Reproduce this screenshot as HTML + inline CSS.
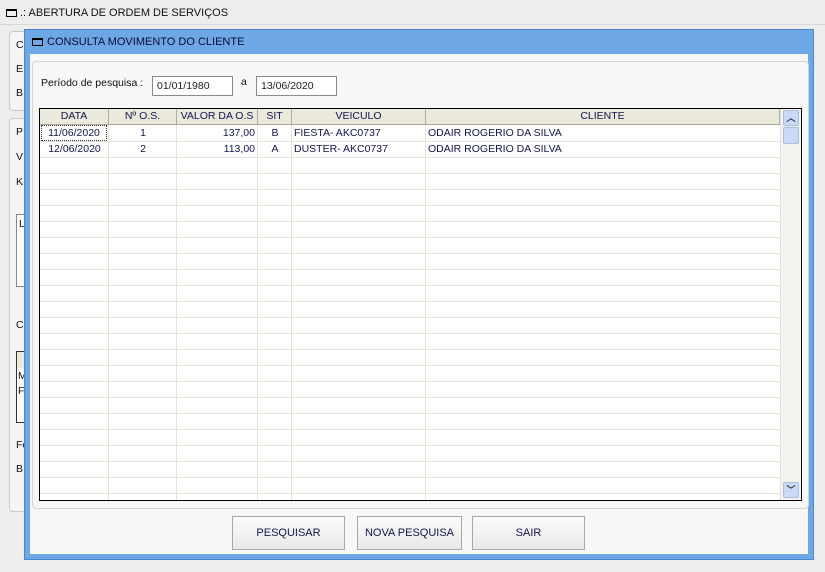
<!DOCTYPE html><html><head><style>
*{box-sizing:border-box;margin:0;padding:0}
body{width:825px;height:572px;background:#ededed;font-family:"Liberation Sans",sans-serif;font-size:10.5px;color:#222;position:relative;overflow:hidden}
.a{position:absolute}
.gb{position:absolute;border:1px solid #c8c8c8;border-radius:4px;background:#f5f5f5}
.l{position:absolute;font-size:10.5px;color:#111}
.ic{position:absolute;width:11px;height:8px;border:1.5px solid #000;border-top-width:2px}
.grid div.r{position:absolute;left:0;right:21px;height:1px;background:#e6e3d3}
.grid div.c{position:absolute;top:16px;bottom:0;width:1px;background:#e6e3d3}
.h{position:absolute;top:0;height:16px;background:#ebe8dc;border-bottom:1px solid #a8a69a;font-size:10.5px;color:#141450;text-align:center;line-height:15px;border-right:1px solid #b0ad9f}
.t{position:absolute;height:16px;line-height:16px;font-size:10.5px;color:#141450}
.btn{position:absolute;top:516px;height:34px;border:1px solid #a8a8a8;background:linear-gradient(#fbfbfb,#e8e8e8);font-size:11px;color:#141450;text-align:center;line-height:32px}
</style></head><body>
<div class="ic" style="left:6px;top:9px"></div>
<div class="l" style="left:20px;top:7px;font-size:11px">.: ABERTURA DE ORDEM DE SERVIÇOS</div>
<div class="a" style="left:0;top:24px;width:825px;height:1px;background:#d8d8d8"></div>
<div class="gb" style="left:9px;top:31px;width:40px;height:80px"></div>
<div class="gb" style="left:9px;top:118px;width:40px;height:394px"></div>
<div class="l" style="left:16px;top:39px">C</div><div class="l" style="left:16px;top:63px">E</div><div class="l" style="left:16px;top:87px">B</div>
<div class="l" style="left:16px;top:126px">P</div><div class="l" style="left:16px;top:151px">V</div><div class="l" style="left:16px;top:176px">K</div>
<div class="a" style="left:16px;top:214px;width:20px;height:73px;border:1px solid #888;border-right:none;background:#fff"></div>
<div class="l" style="left:19px;top:218px">L</div>
<div class="l" style="left:16px;top:319px">C</div>
<div class="a" style="left:16px;top:351px;width:20px;height:72px;border:1px solid #333;border-right:none;background:#fff"></div>
<div class="a" style="left:17px;top:352px;width:19px;height:16px;background:#ebe8dc"></div>
<div class="l" style="left:18px;top:370px">M</div><div class="l" style="left:18px;top:385px">F</div>
<div class="l" style="left:16px;top:439px">Fo</div><div class="l" style="left:16px;top:463px">B</div>

<div class="a" style="left:24px;top:29px;width:790px;height:531px;background:#6ea7e6;border:1px solid #4b86d0"></div>
<div class="a" style="left:30px;top:54px;width:778px;height:500px;background:#f7f7f7"></div>
<div class="ic" style="left:32px;top:38px"></div>
<div class="l" style="left:47px;top:36px;font-size:11px;color:#0a0a30">CONSULTA MOVIMENTO DO CLIENTE</div>
<div class="gb" style="left:32px;top:61px;width:777px;height:448px;background:#f7f7f7;border-color:#d4d4d4"></div>
<div class="l" style="left:41px;top:77px">Período de pesquisa :</div>
<div class="a" style="left:152px;top:76px;width:81px;height:20px;border:1px solid #8a8a8a;background:#fff;font-size:10.5px;padding:3px 0 0 4px">01/01/1980</div>
<div class="l" style="left:241px;top:76px">a</div>
<div class="a" style="left:256px;top:76px;width:81px;height:20px;border:1px solid #8a8a8a;background:#fff;font-size:10.5px;padding:3px 0 0 4px">13/06/2020</div>

<div class="a grid" style="left:39px;top:108px;width:763px;height:393px;border:1px solid #000;background:#fff;overflow:hidden">
<div class="h" style="left:0;width:69px">DATA</div>
<div class="h" style="left:69px;width:68px">Nº O.S.</div>
<div class="h" style="left:137px;width:81px">VALOR DA O.S</div>
<div class="h" style="left:218px;width:34px">SIT</div>
<div class="h" style="left:252px;width:134px">VEICULO</div>
<div class="h" style="left:386px;width:354px">CLIENTE</div>
<div class="c" style="left:68px"></div><div class="c" style="left:136px"></div><div class="c" style="left:217px"></div><div class="c" style="left:251px"></div><div class="c" style="left:385px"></div>
<div class="r" style="top:32px"></div><div class="r" style="top:48px"></div><div class="r" style="top:64px"></div><div class="r" style="top:80px"></div><div class="r" style="top:96px"></div><div class="r" style="top:112px"></div><div class="r" style="top:128px"></div><div class="r" style="top:144px"></div><div class="r" style="top:160px"></div><div class="r" style="top:176px"></div><div class="r" style="top:192px"></div><div class="r" style="top:208px"></div><div class="r" style="top:224px"></div><div class="r" style="top:240px"></div><div class="r" style="top:256px"></div><div class="r" style="top:272px"></div><div class="r" style="top:288px"></div><div class="r" style="top:304px"></div><div class="r" style="top:320px"></div><div class="r" style="top:336px"></div><div class="r" style="top:352px"></div><div class="r" style="top:368px"></div><div class="r" style="top:384px"></div>
<div class="t" style="left:1px;top:16px;width:66px;border:1px dotted #333;text-align:center;line-height:14px">11/06/2020</div>
<div class="t" style="left:69px;top:16px;width:68px;text-align:center">1</div>
<div class="t" style="left:137px;top:16px;width:78px;text-align:right">137,00</div>
<div class="t" style="left:218px;top:16px;width:34px;text-align:center">B</div>
<div class="t" style="left:254px;top:16px">FIESTA- AKC0737</div>
<div class="t" style="left:388px;top:16px">ODAIR ROGERIO DA SILVA</div>
<div class="t" style="left:0;top:32px;width:69px;text-align:center">12/06/2020</div>
<div class="t" style="left:69px;top:32px;width:68px;text-align:center">2</div>
<div class="t" style="left:137px;top:32px;width:78px;text-align:right">113,00</div>
<div class="t" style="left:218px;top:32px;width:34px;text-align:center">A</div>
<div class="t" style="left:254px;top:32px">DUSTER- AKC0737</div>
<div class="t" style="left:388px;top:32px">ODAIR ROGERIO DA SILVA</div>
<div class="a" style="left:740px;top:0;width:21px;height:391px;background:#f3f3ee;border-left:1px solid #e0e0d8"></div>
<div class="a" style="left:743px;top:1px;width:16px;height:16px;background:#c9daf8;border:1px solid #a9bde6;border-radius:2px;font-size:9px;color:#234;text-align:center;line-height:15px;font-weight:bold">︿</div>
<div class="a" style="left:743px;top:18px;width:16px;height:17px;background:#c9daf8;border:1px solid #a9bde6;border-radius:2px"></div>
<div class="a" style="left:743px;top:373px;width:16px;height:16px;background:#c9daf8;border:1px solid #a9bde6;border-radius:2px;font-size:9px;color:#234;text-align:center;line-height:15px;font-weight:bold">﹀</div>
</div>
<div class="btn" style="left:232px;width:113px">PESQUISAR</div>
<div class="btn" style="left:357px;width:105px">NOVA PESQUISA</div>
<div class="btn" style="left:472px;width:113px">SAIR</div>
</body></html>
